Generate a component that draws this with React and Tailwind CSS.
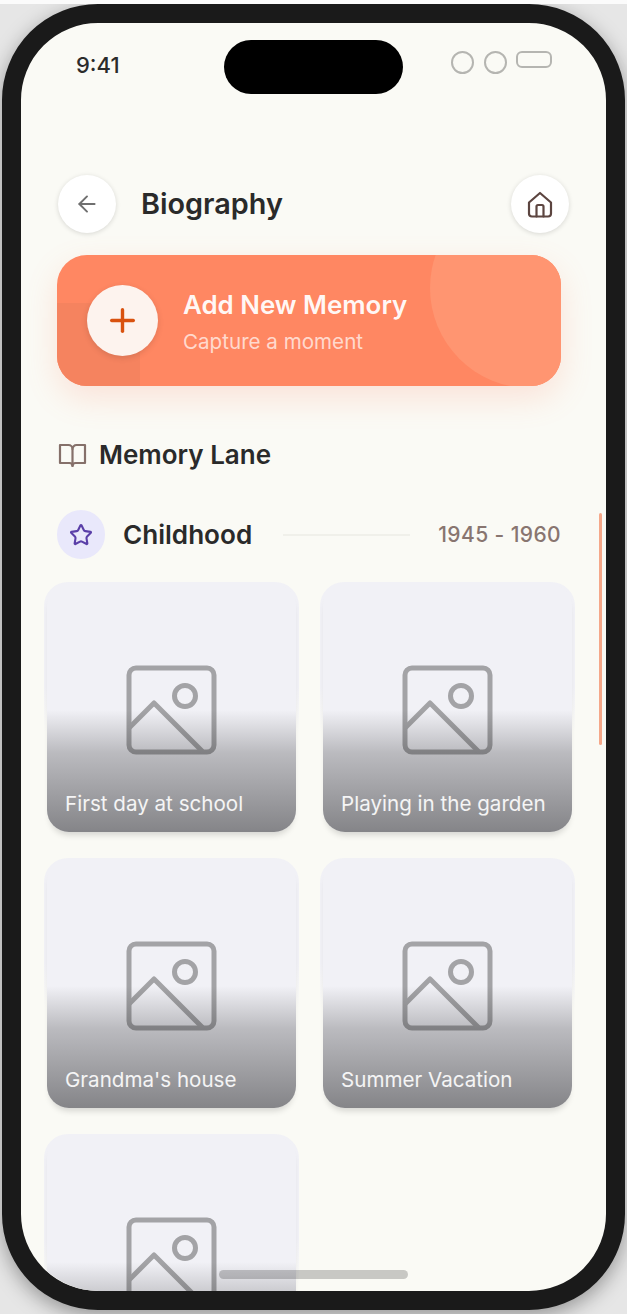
import { ArrowLeft, Plus, Star } from "lucide-react";

const memories = [
  { id: 1, title: "First day at school" },
  { id: 2, title: "Playing in the garden" },
  { id: 3, title: "Grandma's house" },
  { id: 4, title: "Summer Vacation" },
  { id: 5, title: "" },
];

const PhotoIcon = () => (
  <svg width="91" height="90" viewBox="0 0 91 90" fill="none" stroke="#a3a3a6" strokeWidth="5" strokeLinejoin="round" strokeLinecap="round">
    <rect x="3" y="3" width="85" height="84" rx="7" />
    <circle cx="59" cy="31" r="10.5" />
    <path d="M4 62 L28 38 L76 86" />
  </svg>
);

const HomeIcon = () => (
  <svg width="26" height="27" viewBox="0 0 26 27" fill="none" stroke="#5c4540" strokeWidth="2.2" strokeLinejoin="round" strokeLinecap="round">
    <path d="M2 11.5 L13 2 L24 11.5 V22.5 a3 3 0 0 1 -3 3 H5 a3 3 0 0 1 -3 -3 Z" />
    <path d="M9.5 25.5 V15.5 a1.5 1.5 0 0 1 1.5 -1.5 h4 a1.5 1.5 0 0 1 1.5 1.5 V25.5" />
  </svg>
);

const BookIcon = () => (
  <svg width="29" height="25" viewBox="0 0 29 25" fill="none" stroke="#85706a" strokeWidth="2.2" strokeLinejoin="round" strokeLinecap="round">
    <path d="M14.5 6 a4 4 0 0 0 -4 -4 H2 V20 H11.5 a3 3 0 0 1 3 3 a3 3 0 0 1 3 -3 H27 V2 H18.5 a4 4 0 0 0 -4 4 Z" />
    <path d="M14.5 6 V23" />
  </svg>
);

const MemoryCard = ({ title }) => (
  <div className="relative h-[250px] w-[255px] px-[3px] pt-[2px]">
    <div className="absolute inset-x-0 top-0 h-[150px] rounded-t-[24px] bg-gradient-to-b from-[#f1f1f6] from-70% to-[#f1f1f6]/0" />
    <div className="relative flex h-[248px] items-center justify-center overflow-hidden rounded-[22px] bg-[#f1f1f6] shadow-[0_6px_6px_-3px_rgba(0,0,0,0.15)]">
      <div className="pt-[4px]">
        <PhotoIcon />
      </div>
      <div className="absolute inset-x-0 bottom-0 flex h-[122px] items-end bg-gradient-to-b from-[#18181a]/0 via-[#18181a]/25 via-35% to-[#18181a]/50 px-[18px] pb-[14px]">
        <span className="text-[20.6px] leading-[28px] text-white/90">{title}</span>
      </div>
    </div>
  </div>
);

export default function App() {
  return (
    <div className="h-[1314px] w-[627px] overflow-hidden border-t-[4px] border-[#fbfbfb] bg-[#e6e6e6] pl-[2px] font-['Inter',sans-serif]">
      <div className="h-[1306px] w-[623px] rounded-[96px] border-[19px] border-[#1a1a1a] bg-[#fafaf5] shadow-[0_6px_20px_rgba(0,0,0,0.35)]">
        <div className="relative h-full overflow-hidden rounded-[78px]">
          {/* status bar */}
          <div className="flex h-[152px] items-start justify-between pl-[55px] pr-[54px] pt-[27px]">
            <span className="text-[22px] font-medium leading-[30px] text-[#2b2b2b]">9:41</span>
            <div className="flex items-start gap-[10px] pt-[1px]">
              <div className="h-[23px] w-[23px] rounded-full border-2 border-[#b5b5b1]" />
              <div className="h-[23px] w-[23px] rounded-full border-2 border-[#b5b5b1]" />
              <div className="-ml-[1px] h-[17px] w-[36px] rounded-[6px] border-2 border-[#b5b5b1]" />
            </div>
          </div>
          <div className="absolute left-[203px] top-[17px] h-[54px] w-[179px] rounded-full bg-black" />

          {/* header */}
          <div className="flex items-center justify-between pl-[37px] pr-[37px]">
            <div className="flex items-center gap-[25px]">
              <button className="flex h-[58px] w-[58px] items-center justify-center rounded-full bg-white shadow-[0_1px_5px_rgba(0,0,0,0.14)]">
                <ArrowLeft size={26} strokeWidth={1.8} className="text-[#6f6f6f]" />
              </button>
              <h1 className="text-[28.8px] font-semibold leading-[40px] text-[#2a2a2a]">Biography</h1>
            </div>
            <button className="flex h-[58px] w-[58px] items-center justify-center rounded-full bg-white shadow-[0_1px_5px_rgba(0,0,0,0.14)]">
              <HomeIcon />
            </button>
          </div>

          {/* add memory */}
          <div className="ml-[36px] mt-[22px] w-[504px]">
            <div className="relative flex h-[131px] items-center gap-[25px] overflow-hidden rounded-[30px] bg-[#ff8762] pl-[30px] shadow-[0_12px_32px_rgba(255,135,98,0.2)]">
              <div className="absolute bottom-0 left-0 h-[83px] w-[83px] bg-[#f5835f]" />
              <div className="absolute -right-[69px] -top-[67px] h-[200px] w-[200px] rounded-full bg-[#ff9571]" />
              <div className="relative flex h-[71px] w-[71px] items-center justify-center rounded-full bg-[#fdf3ee] shadow-[0_2px_6px_rgba(0,0,0,0.12)]">
                <Plus size={37} strokeWidth={2.2} className="text-[#d9520f]" />
              </div>
              <div className="relative flex flex-col gap-[4px] pt-[3px]">
                <span className="text-[25.9px] font-semibold leading-[36px] text-white/95">Add New Memory</span>
                <span className="text-[20.6px] leading-[30px] text-white/70">Capture a moment</span>
              </div>
            </div>
          </div>

          {/* memory lane */}
          <div className="ml-[37px] mt-[50px] flex items-center gap-[12px]">
            <BookIcon />
            <h2 className="text-[26px] font-semibold leading-[38px] text-[#2a2a2a]">Memory Lane</h2>
          </div>

          <div className="ml-[36px] mt-[36px] flex w-[504px] items-center">
            <div className="flex h-[49px] w-[48px] items-center justify-center rounded-full bg-[#e9e8fb]">
              <Star size={24} strokeWidth={2.1} className="text-[#5a3fa8]" />
            </div>
            <h3 className="ml-[18px] text-[26.1px] font-semibold leading-[38px] text-[#2a2a2a]">Childhood</h3>
            <div className="ml-[31px] h-[2px] w-[127px] bg-[#f0f0ea]" />
            <span className="ml-auto pt-[1px] text-[21px] font-medium leading-[30px] tracking-[0.4px] text-[#887570]">1945 - 1960</span>
          </div>

          {/* memories */}
          <div className="ml-[23px] mt-[23px] grid w-[531px] grid-cols-[255px_255px] gap-x-[21px] gap-y-[26px]">
            {memories.map((memory) => (
              <MemoryCard key={memory.id} title={memory.title} />
            ))}
          </div>

          {/* scrollbar + home bar */}
          <div className="absolute left-[578px] top-[490px] h-[232px] w-[3px] rounded-full bg-[#f5a88a]" />
          <div className="absolute left-[198px] top-[1247px] h-[9px] w-[189px] rounded-full bg-black/20" />
        </div>
      </div>
    </div>
  );
}
